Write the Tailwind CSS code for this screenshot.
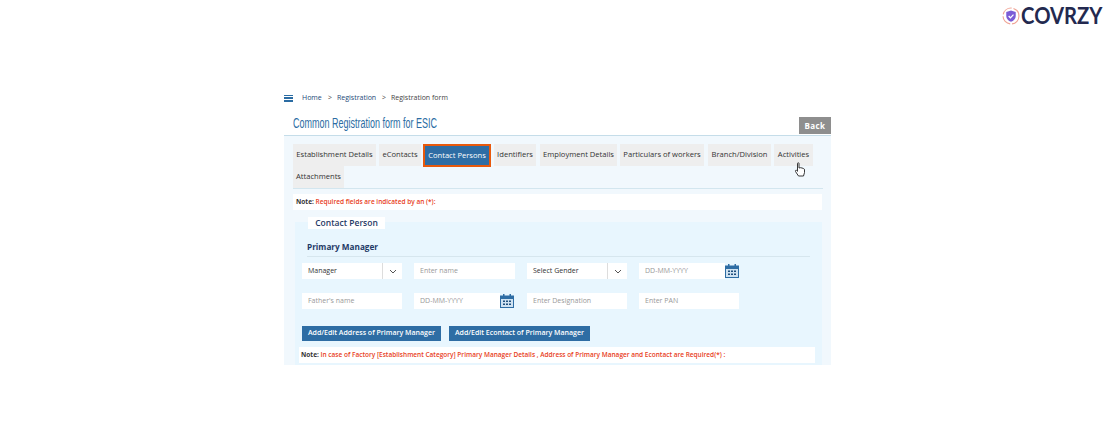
<!DOCTYPE html>
<html lang="en">
<head>
    <meta charset="UTF-8">
    <title>Common Registration form for ESIC</title>
    <script src="https://cdn.jsdelivr.net/npm/@tailwindcss/browser@4"></script>
</head>
<body class="bg-white overflow-hidden">
<div class="w-[1116px] h-[437px] font-['Open_Sans',sans-serif] text-[7px] text-[#333]">

    <!-- logo -->
    <div class="flex justify-end items-center h-[32px] pr-[14px]">
        <svg class="-mr-[6px]" width="18" height="18" viewBox="0 0 19 19" fill="none">
            <circle cx="9.5" cy="9.5" r="8.4" stroke="#f0a496" stroke-width="1.2" stroke-dasharray="12 2"/>
            <path d="M9.5 3.6l5 1.8v4c0 3-2.2 5-5 6.2-2.8-1.2-5-3.200-5-6.200v-4z" fill="#7b5bd6"/>
            <path d="M7 9.500l1.900 1.900 3.200-3.400" stroke="#fff" stroke-width="1.300"/>
        </svg>
        <span class="font-['Lato',sans-serif] font-bold text-[22px] leading-none text-[#23294f] scale-x-[0.92] origin-right">COVRZY</span>
    </div>

    <div class="ml-[284px] w-[547px] mt-[58px]">
        <!-- breadcrumb -->
        <div class="flex items-center h-[16px] text-[#234a78]">
            <div class="w-[9px] h-[7px] flex flex-col justify-between">
                <div class="h-[1.500px] bg-[#2b6ca3]"></div>
                <div class="h-[1.500px] bg-[#2b6ca3]"></div>
                <div class="h-[1.500px] bg-[#2b6ca3]"></div>
            </div>
            <span class="ml-[9px] w-[19px]">Home</span>
            <span class="ml-[7px] w-[9px] text-[#444]">&gt;</span>
            <span class="w-[45px]">Registration</span>
            <span class="w-[9px] text-[#444]">&gt;</span>
            <span class="text-[#444]">Registration form</span>
        </div>

        <!-- title -->
        <div class="flex justify-between items-end h-[30px] pb-[1px] border-b border-[#c5dde9]">
            <h1 class="ml-[9px] mb-[2px] font-['Liberation_Sans',sans-serif] text-[14px] leading-[18px] scale-x-[0.643] origin-left whitespace-nowrap text-[#2b6ca3]">Common Registration form for ESIC</h1>
            <div class="w-[32px] h-[17px] bg-[#8e8e8e] text-white font-bold text-[8px] flex items-center justify-center tracking-[0.4px]">Back</div>
        </div>

        <!-- panel -->
        <div class="relative h-[229px] bg-[#f1f8fd] pt-[8px]">
            <div class="ml-[9px] w-[530px] border-b border-[#d3e6ef]">
                <div class="flex flex-wrap font-medium text-[7.600px] text-[#333] whitespace-nowrap">
                    <div class="h-[22px] w-[83px] bg-[#eeeeee] flex items-center justify-center">Establishment Details</div>
                    <div class="h-[22px] w-[42px] ml-[3px] bg-[#eeeeee] flex items-center justify-center">eContacts</div>
                    <div class="h-[23px] w-[68px] ml-[2px] bg-[#2e6da4] border-2 border-[#e8590c] text-white flex items-center justify-center">Contact Persons</div>
                    <div class="h-[22px] w-[42px] ml-[3px] bg-[#eeeeee] flex items-center justify-center">Identifiers</div>
                    <div class="h-[22px] w-[77px] ml-[4px] bg-[#eeeeee] flex items-center justify-center">Employment Details</div>
                    <div class="h-[22px] w-[84px] ml-[3px] bg-[#eeeeee] flex items-center justify-center">Particulars of workers</div>
                    <div class="h-[22px] w-[63px] ml-[4px] bg-[#eeeeee] flex items-center justify-center">Branch/Division</div>
                    <div class="h-[22px] w-[39px] ml-[3px] bg-[#eeeeee] flex items-center justify-center">Activities</div>
                    <div class="h-[22px] w-[51px] -mt-[1px] bg-[#eeeeee] flex items-center justify-center">Attachments</div>
                </div>
            </div>

            <!-- required note -->
            <div class="ml-[9px] mt-[5px] w-[529px] h-[16px] bg-white flex items-center pl-[3px] font-semibold text-[6.500px] text-[#e8401c]">
                <span class="text-[#333] font-bold">Note:&nbsp;</span>Required fields are indicated by an (*):
            </div>

            <!-- contact person box -->
            <div class="relative ml-[11px] mt-[12px] w-[527px] h-[143px] bg-[#e8f6fe] pt-[18px]">
                <div class="absolute left-[13px] -top-[5px] w-[77px] h-[12px] bg-white flex items-center justify-center font-semibold text-[8.500px] leading-none pt-[1px] text-[#1f3a66]">Contact Person</div>
                <div class="mx-[12px] pb-[2px] border-b border-[#d6e6ee] font-bold text-[8.200px] leading-[14px] text-[#1f3a66]">Primary Manager</div>

                <div class="flex mt-[6px] ml-[7px] gap-[12px] items-start">
                    <div class="w-[100px] h-[16px] bg-white flex items-center text-[#333]">
                        <span class="flex-1 pl-[6px]">Manager</span>
                        <span class="w-[20px] h-full border-l border-[#ddd] flex items-center justify-center">
                            <svg width="8" height="5" viewBox="0 0 8 5" fill="none"><path d="M1 1l3 3 3-3" stroke="#555"/></svg>
                        </span>
                    </div>
                    <div class="w-[101px] h-[16px] bg-white flex items-center pl-[6px] text-[#999]">Enter name</div>
                    <div class="w-[100px] h-[16px] bg-white flex items-center text-[#333]">
                        <span class="flex-1 pl-[6px]">Select Gender</span>
                        <span class="w-[20px] h-full border-l border-[#ddd] flex items-center justify-center">
                            <svg width="8" height="5" viewBox="0 0 8 5" fill="none"><path d="M1 1l3 3 3-3" stroke="#555"/></svg>
                        </span>
                    </div>
                    <div class="flex items-center">
                        <div class="w-[86px] h-[16px] bg-white flex items-center pl-[6px] text-[#999]">DD-MM-YYYY</div>
                        <svg width="14" height="14" viewBox="0 0 14 14">
                            <rect y="1.500" width="14" height="12.500" fill="#2e6da4"/>
                            <rect x="3" width="1.500" height="3" fill="#2e6da4"/><rect x="9.500" width="1.500" height="3" fill="#2e6da4"/>
                            <rect x="1" y="5" width="12" height="8" fill="#cfe2f1"/>
                            <path d="M3 6.500h2v1.500h-2zM6 6.500h2v1.500h-2zM9 6.500h2v1.500h-2zM3 9.500h2v1.500h-2zM6 9.500h2v1.500h-2zM9 9.500h2v1.500h-2z" fill="#1f4f7d"/>
                        </svg>
                    </div>
                </div>

                <div class="flex mt-[14px] ml-[7px] gap-[12px] items-start">
                    <div class="w-[100px] h-[16px] bg-white flex items-center pl-[6px] text-[#999]">Father's name</div>
                    <div class="flex items-center w-[101px]">
                        <div class="w-[86px] h-[16px] bg-white flex items-center pl-[6px] text-[#999]">DD-MM-YYYY</div>
                        <svg width="14" height="14" viewBox="0 0 14 14">
                            <rect y="1.500" width="14" height="12.500" fill="#2e6da4"/>
                            <rect x="3" width="1.500" height="3" fill="#2e6da4"/><rect x="9.500" width="1.500" height="3" fill="#2e6da4"/>
                            <rect x="1" y="5" width="12" height="8" fill="#cfe2f1"/>
                            <path d="M3 6.500h2v1.500h-2zM6 6.500h2v1.500h-2zM9 6.500h2v1.500h-2zM3 9.500h2v1.500h-2zM6 9.500h2v1.500h-2zM9 9.500h2v1.500h-2z" fill="#1f4f7d"/>
                        </svg>
                    </div>
                    <div class="w-[100px] h-[16px] bg-white flex items-center pl-[6px] text-[#999]">Enter Designation</div>
                    <div class="w-[100px] h-[16px] bg-white flex items-center pl-[6px] text-[#999]">Enter PAN</div>
                </div>

                <div class="flex mt-[17px] ml-[7px] gap-[8px] font-semibold text-white whitespace-nowrap">
                    <div class="w-[139px] h-[15px] bg-[#2e6da4] flex items-center justify-center">Add/Edit Address of Primary Manager</div>
                    <div class="w-[141px] h-[15px] bg-[#2e6da4] flex items-center justify-center">Add/Edit Econtact of Primary Manager</div>
                </div>

                <div class="ml-[4px] mt-[6px] w-[516px] h-[16px] bg-white flex items-center pl-[2px] font-semibold text-[6.500px] text-[#e8401c] whitespace-nowrap">
                    <span class="text-[#333] font-bold">Note:&nbsp;</span>In case of Factory [Establishment Category] Primary Manager Details , Address of Primary Manager and Econtact are Required(*) :
                </div>
            </div>

            <!-- mouse pointer -->
            <svg class="absolute left-[510px] top-[26px]" width="12" height="15" viewBox="0 0 12 15">
                <path d="M3.500 1.500c0-1 1.500-1 1.500 0v4.500l1.500-.3 1.500.3 1.500.5c.8.3 1 .8 1 1.500v2.500l-1 3.500h-5l-3-4.500c-.5-1 .5-1.700 1.200-1l.8.8z" fill="#fff" stroke="#222" stroke-width="0.900"/>
            </svg>
        </div>
    </div>
</div>
</body>
</html>
